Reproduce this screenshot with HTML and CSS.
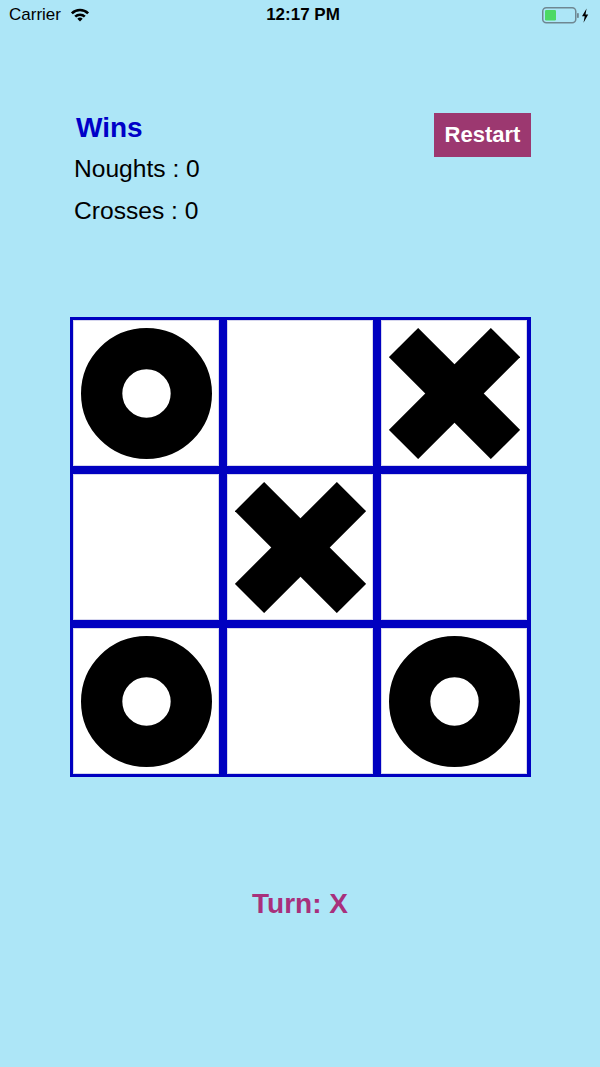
FILE: index.html
```html
<!DOCTYPE html>
<html>
<head>
<meta charset="utf-8">
<link rel="stylesheet" href="styles.css">
</head>
<body>
<div class="status">
  <div class="status-left">
    <span class="carrier">Carrier</span>
    <svg class="wifi" width="20" height="14" viewBox="0 0 20 14">
      <path d="M1.87 5.37 A11.5 11.5 0 0 1 18.13 5.37" fill="none" stroke="#000" stroke-width="2.6"/>
      <path d="M5.19 8.69 A6.8 6.8 0 0 1 14.81 8.69" fill="none" stroke="#000" stroke-width="2.6"/>
      <path d="M10 13.5 L7.31 10.81 A3.8 3.8 0 0 1 12.69 10.81 Z" fill="#000"/>
    </svg>
  </div>
  <div class="time">12:17 PM</div>
  <div class="status-right">
    <svg class="battery" width="48" height="17" viewBox="0 0 48 17">
      <rect x="0.75" y="0.75" width="33" height="15" rx="3.5" fill="none" stroke="#6f8792" stroke-width="1.5"/>
      <rect x="3" y="3" width="11" height="10.5" rx="1.2" fill="#4cd964"/>
      <rect x="35" y="6" width="1.8" height="5" rx="0.8" fill="#6f8792"/>
      <path d="M44.6 1.5 L40 9.2 L42.7 9.2 L41.5 15.8 L46.2 7.6 L43.5 7.6 Z" fill="#000"/>
    </svg>
  </div>
</div>

<div class="header">
  <div class="wins-col">
    <h2 class="wins">Wins</h2>
    <p class="score">Noughts : 0</p>
    <p class="score">Crosses : 0</p>
  </div>
  <button class="restart">Restart</button>
</div>

<div class="board">
  <div class="cell">
    <svg class="mark" viewBox="0 0 130 130"><circle cx="65" cy="65" r="44.5" fill="none" stroke="#000" stroke-width="41"/></svg>
  </div>
  <div class="cell"></div>
  <div class="cell">
    <svg class="mark" viewBox="0 0 130 130"><g transform="rotate(45 65 65)"><rect x="-6.5" y="44.5" width="143" height="41" fill="#000"/><rect x="44.5" y="-6.5" width="41" height="143" fill="#000"/></g></svg>
  </div>
  <div class="cell"></div>
  <div class="cell">
    <svg class="mark" viewBox="0 0 130 130"><g transform="rotate(45 65 65)"><rect x="-6.5" y="44.5" width="143" height="41" fill="#000"/><rect x="44.5" y="-6.5" width="41" height="143" fill="#000"/></g></svg>
  </div>
  <div class="cell"></div>
  <div class="cell">
    <svg class="mark" viewBox="0 0 130 130"><circle cx="65" cy="65" r="44.5" fill="none" stroke="#000" stroke-width="41"/></svg>
  </div>
  <div class="cell"></div>
  <div class="cell">
    <svg class="mark" viewBox="0 0 130 130"><circle cx="65" cy="65" r="44.5" fill="none" stroke="#000" stroke-width="41"/></svg>
  </div>
</div>

<div class="turn">Turn: X</div>
</body>
</html>
```

FILE: styles.css
```css
html {
  background: #ade6f7;
}
body {
  margin: 0;
  min-height: 1067px;
  background: #ade6f7;
  font-family: "Liberation Sans", Arial, sans-serif;
  color: #000;
}
.status {
  height: 30px;
  display: grid;
  grid-template-columns: 1fr auto 1fr;
  align-items: center;
  line-height: 30px;
  font-size: 17px;
}
.status-left {
  display: flex;
  align-items: center;
  padding-left: 9px;
  gap: 9px;
}
.carrier {
  font-size: 17px;
}
.wifi {
  display: block;
  margin-top: -1px;
}
.time {
  font-weight: bold;
  font-size: 17px;
  margin-left: 6px;
}
.status-right {
  display: flex;
  justify-content: flex-end;
  padding-right: 10px;
}
.battery {
  display: block;
  margin-top: 1px;
}
.header {
  display: flex;
  justify-content: space-between;
  align-items: flex-start;
  margin-top: 82px;
  padding-left: 74px;
  padding-right: 69px;
}
.wins {
  margin: 0 0 0 2px;
  font-size: 28px;
  line-height: 32px;
  font-weight: bold;
  color: #0000c8;
}
.score {
  margin: 0;
  font-size: 24.6px;
  line-height: 42px;
}
.wins + .score {
  margin-top: 4px;
}
.restart {
  margin-top: 1px;
  width: 97px;
  height: 44px;
  border: none;
  padding: 0;
  background: #9c3870;
  color: #fff;
  font-family: "Liberation Sans", Arial, sans-serif;
  font-weight: bold;
  font-size: 22px;
}
.board {
  margin-top: 85px;
  margin-left: 70px;
  width: max-content;
  display: grid;
  grid-template-columns: repeat(3, 146px);
  grid-template-rows: repeat(3, 146px);
  gap: 8px;
  padding: 3px 4px 3px 3px;
  background: #0000c0;
}
.cell {
  background: #fff;
  display: flex;
  align-items: center;
  justify-content: center;
  box-shadow: inset 0 0 0 1px #d6d6ee;
}
.mark {
  width: 131px;
  height: 131px;
  display: block;
}
.turn {
  margin-top: 110px;
  text-align: center;
  font-size: 28px;
  line-height: 34px;
  font-weight: bold;
  color: #a8307c;
}
```
